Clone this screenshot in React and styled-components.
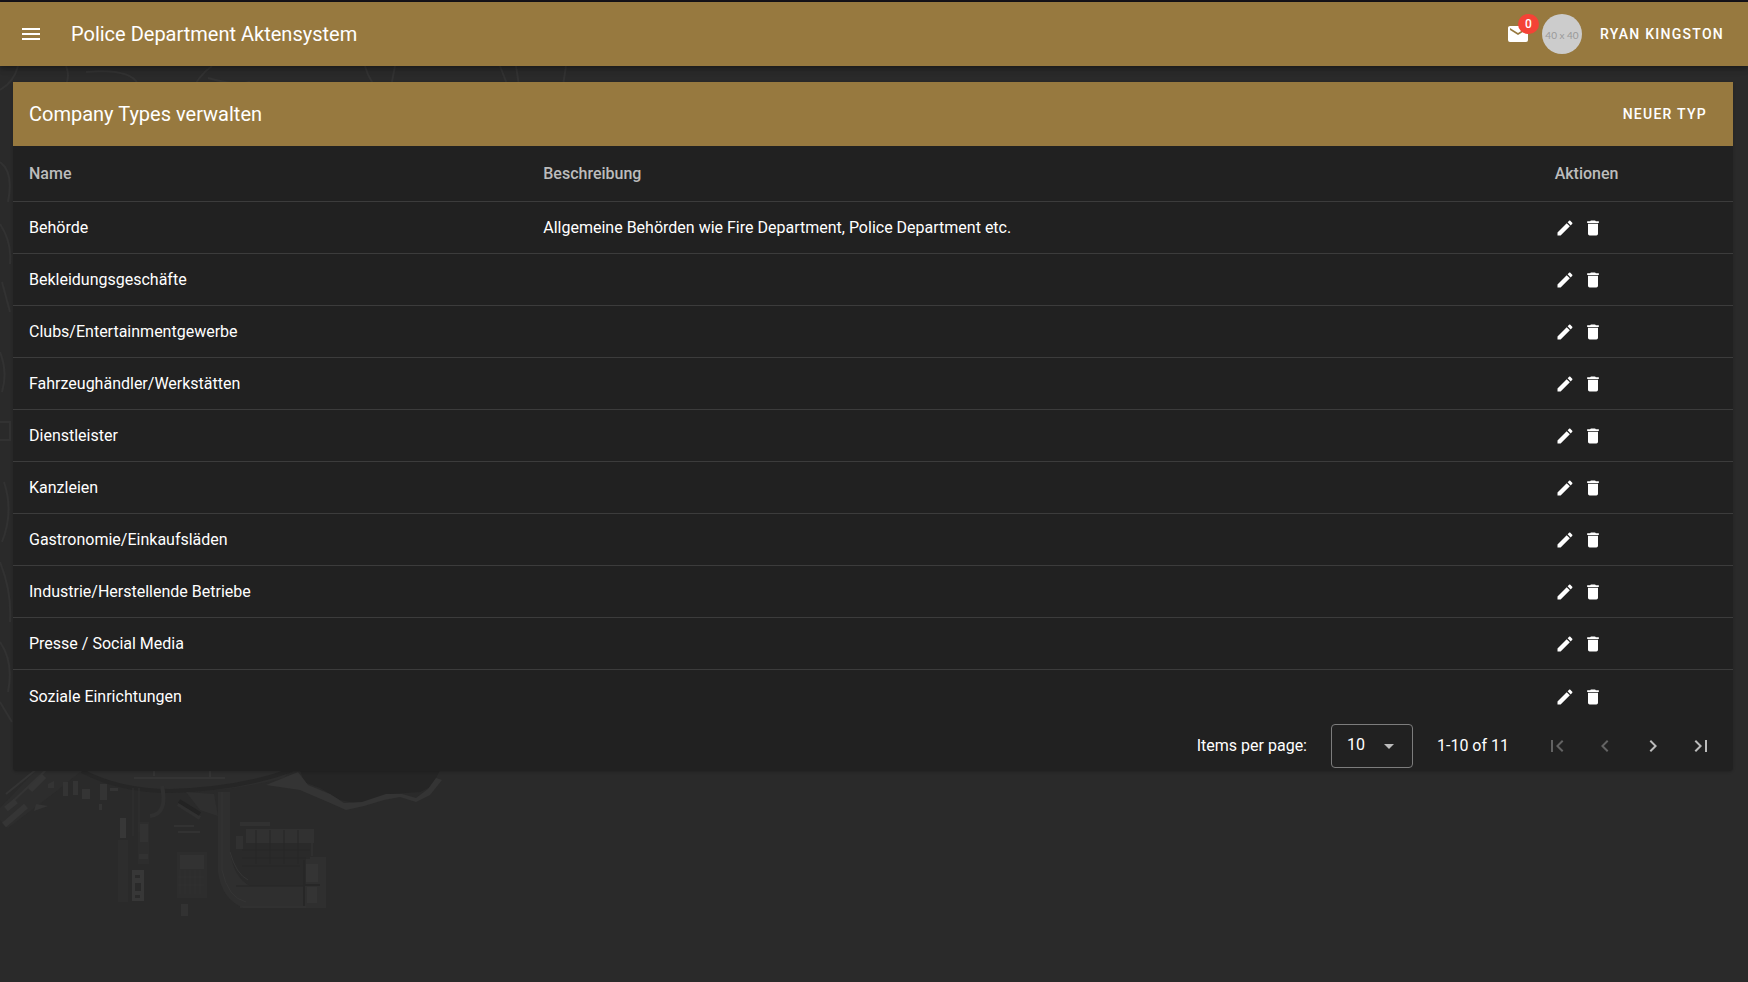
import React from "react";
import styled, { createGlobalStyle } from "styled-components";

const GlobalStyle = createGlobalStyle`
  *, *::before, *::after { box-sizing: border-box; }
  body { margin: 0; background: #2a2a2a; color: #fff; font: 400 16px/24px Roboto, sans-serif; }
  button, select { font: inherit; color: inherit; }
`;

const Page = styled.div`
  display: grid;
  grid-template-columns: minmax(0, 1fr);
  min-height: 100vh;
  border-top: 2px solid #16131a;
`;
const Backdrop = styled.svg`
  grid-area: 1 / 1;
  width: 100%;
  height: 100%;
  fill: none;
  stroke-linecap: butt;
`;
const Layout = styled.div`
  grid-area: 1 / 1;
  min-width: 0;
  z-index: 1;
`;
const AppBar = styled.header`
  display: flex;
  align-items: center;
  height: 64px;
  padding: 0 8px 0 7px;
  background: #97793f;
  box-shadow: 0 2px 4px -1px rgba(0, 0, 0, 0.2), 0 4px 5px rgba(0, 0, 0, 0.14), 0 1px 10px rgba(0, 0, 0, 0.12);
`;
const IconButton = styled.button`
  display: grid;
  place-items: center;
  width: 48px;
  height: 48px;
  padding: 0;
  border: 0;
  background: none;
  color: ${(p) => p.$color || "#fff"};
`;
const AppTitle = styled.h1`
  flex: 1;
  margin: 0 0 0 16px;
  font-size: 20px;
  font-weight: 400;
`;
const MailButton = styled.button`
  position: relative;
  display: block;
  width: 24px;
  height: 24px;
  padding: 0;
  border: 0;
  background: none;
`;
const Badge = styled.span`
  position: absolute;
  left: 12px;
  bottom: 12px;
  min-width: 20px;
  height: 20px;
  padding: 0 7px;
  border-radius: 10px;
  background: #f44336;
  font-size: 12px;
  font-weight: 500;
  line-height: 20px;
`;
const Avatar = styled.span`
  width: 40px;
  height: 40px;
  margin-left: 12px;
  border-radius: 50%;
  background: #ccc;
  color: #999;
  font: 10px/42px Lato, sans-serif;
  text-align: center;
`;
const TextButton = styled.button`
  height: 36px;
  margin-left: 2px;
  padding: 0 16px;
  border: 0;
  background: none;
  font-size: 14px;
  font-weight: 500;
  letter-spacing: 0.09em;
  text-transform: uppercase;
`;
const Main = styled.main`
  padding: 16px 15px 16px 13px;
`;
const Card = styled.section`
  border-radius: 0 0 4px 4px;
  background: #212121;
  box-shadow: 0 1px 3px rgba(0, 0, 0, 0.2);
`;
const CardBar = styled.div`
  display: flex;
  align-items: center;
  justify-content: space-between;
  height: 64px;
  padding: 0 10px 0 16px;
  background: #97793f;
`;
const CardTitle = styled.h2`
  margin: 0;
  font-size: 20px;
  font-weight: 400;
`;
const Table = styled.table`
  width: 100%;
  table-layout: fixed;
  border-spacing: 0;
`;
const HeadCell = styled.th`
  width: ${(p) => p.$width};
  height: 56px;
  padding: 0 16px;
  border-bottom: 1px solid #3c3c3c;
  color: #bcbcbc;
  font-weight: 500;
  text-align: left;
`;
const Cell = styled.td`
  height: 52px;
  padding: 0 16px;
  border-bottom: 1px solid #3c3c3c;
  tr:last-child > & { border-bottom: 0; padding-top: 1px; }
`;
const Actions = styled.div`
  display: flex;
  gap: 8px;
  padding-top: 1px;
`;
const ActionButton = styled.button`
  display: block;
  width: 20px;
  height: 20px;
  padding: 0;
  border: 0;
  background: none;
`;
const Footer = styled.footer`
  display: flex;
  flex-wrap: wrap;
  align-items: center;
  justify-content: flex-end;
  padding: 0 8px 1px;
`;
const SelectBox = styled.span`
  display: grid;
  align-items: center;
  width: 82px;
  height: 44px;
  margin: 0 24px;
  svg { grid-area: 1 / 1; justify-self: end; margin-right: 12px; pointer-events: none; color: #bcbcbc; }
`;
const Select = styled.select`
  grid-area: 1 / 1;
  width: 100%;
  height: 100%;
  padding: 0 15px 2px;
  border: 1px solid #7d7d7d;
  border-radius: 4px;
  appearance: none;
  background: #212121;
`;
const Pager = styled.nav`
  display: flex;
  margin-left: 24px;
`;
const Glyph = styled.svg`
  display: block;
  fill: currentColor;
`;

const paths = {
  menu: "M3,6H21V8H3V6M3,11H21V13H3V11M3,16H21V18H3V16Z",
  email: "M20,8L12,13L4,8V6L12,11L20,6M20,4H4C2.89,4 2,4.89 2,6V18A2,2 0 0,0 4,20H20A2,2 0 0,0 22,18V6C22,4.89 21.1,4 20,4Z",
  pencil: "M20.71,7.04C21.1,6.65 21.1,6 20.71,5.63L18.37,3.29C18,2.9 17.35,2.9 16.96,3.29L15.12,5.12L18.87,8.87M3,17.25V21H6.75L17.81,9.93L14.06,6.18L3,17.25Z",
  trash: "M19,4H15.5L14.5,3H9.5L8.5,4H5V6H19M6,19A2,2 0 0,0 8,21H16A2,2 0 0,0 18,19V7H6V19Z",
  down: "M7,10L12,15L17,10H7Z",
  first: "M18.41,16.59L13.82,12L18.41,7.41L17,6L11,12L17,18L18.41,16.59M6,6H8V18H6V6Z",
  prev: "M15.41,16.58L10.83,12L15.41,7.41L14,6L8,12L14,18L15.41,16.58Z",
  next: "M8.59,16.58L13.17,12L8.59,7.41L10,6L16,12L10,18L8.59,16.58Z",
  last: "M5.59,7.41L10.18,12L5.59,16.59L7,18L13,12L7,6L5.59,7.41M16,6H18V18H16V6Z",
};
const Icon = ({ name, size = 24 }) => (
  <Glyph width={size} height={size} viewBox="0 0 24 24" aria-hidden="true">
    <path d={paths[name]} />
  </Glyph>
);

// Faint aerial view of the harbour and its shoreline.
const HarbourMap = () => (
  <Backdrop aria-hidden="true">
    {/* hills behind the top and left edges */}
    <g stroke="#323232" strokeWidth="2">
      <path d="M0 88Q14 80 18 64M66 64Q72 78 60 92M190 92Q198 74 212 64M86 70Q130 66 138 82M208 76Q235 84 250 80M365 64Q370 82 382 90M395 64L390 90M500 64L510 90M516 64L520 90M566 64L562 90" />
      <path d="M0 160Q14 170 8 200M0 222Q12 240 10 262M2 280L10 310M0 350Q8 370 2 390M0 420H10V438H0M4 480Q14 510 2 540M0 560Q12 590 10 620M0 640Q14 660 8 690M0 700L12 720" />
    </g>
    {/* mainland roads and the coast */}
    <path fill="#2d2d2d" d="M36 768H290L284 776Q220 792 165 790Q110 786 80 770L58 788L8 826L0 818V806Z" />
    <path stroke="#262626" strokeWidth="4" d="M82 769Q120 789 170 789Q240 787 292 768" />
    <path stroke="#343434" strokeWidth="2" d="M6 792L38 766M10 802L46 768M134 776H225M154 766V774M210 766V776" />
    <path stroke="#353535" strokeWidth="6" d="M4 823L26 804M6 807L16 799M30 788L44 774" />
    <g fill="#343434">
      <path d="M63 780h5v14h-5zM73 779h5v14h-5zM82 787h8v10h-8zM100 782h7v16h-7zM110 786h8v3h-8zM99 802h3v6h-3zM36 802l12 2-14 5zM48 782l6-3v7h-6z" />
    </g>
    <path fill="#252525" d="M300 768H440L432 784L420 790L390 792L360 802L340 798L320 786L304 780Z" />
    <path fill="#343434" d="M266 783L298 770L308 783L330 792L344 801L362 800L386 792L402 792L416 796L428 787L436 776L442 778L430 793L416 800L400 795L384 798L364 804L346 808L328 800L300 788Z" />
    {/* piers */}
    <path fill="#2d2d2d" d="M118 838h10v62h-10zM138 820h11v42h-11zM177 850h30v46h-30z" />
    <path fill="#373737" d="M120 816h6v20h-6zM132 868h12v31h-12z" />
    <path fill="#2a2a2a" d="M135 873h5v3h-5zM135 881h6v8h-6zM135 893h5v3h-5z" />
    <path fill="#323232" d="M140 822h8v18h-8zM139 852h9v5h-9zM180 853h24v14h-24zM181 902h7v12h-7zM178 829h22v2h-22zM174 823h20v2h-20z" />
    <path stroke="#313131" d="M133 786V834M139 786V830M180 868V892M185 868V892M190 868V892M195 868V892M200 868V892M178 875H204M178 883H204" />
    <path stroke="#303030" strokeWidth="4" d="M162 784Q168 812 150 814M178 802L200 816" />
    <path fill="#2f2f2f" d="M186 790L214 792L218 814L200 808Z" />
    <path stroke="#232323" strokeWidth="4" d="M179 799L200 812" />
    {/* container terminal */}
    <path fill="#2f2f2f" d="M218 790H230V850Q234 876 250 884H306V855H326V906H244Q222 898 218 870Z" />
    <path stroke="#353535" strokeWidth="1" d="M222 790V868Q228 896 246 900M230 850Q236 872 248 878M240 905H306M312 828V854" />
    <path fill="#313131" d="M236 834h7v13h-7zM246 827h68v14h-68zM240 820h30v4h-30z" />
    <path stroke="#272727" d="M256 828V862M270 828V862M284 828V862M298 828V862M242 848H310M242 856H310M242 864H300M236 884H304" />
    <path fill="#343434" d="M306 862h12v18h-12zM307 885h10v16h-10z" />
    <path stroke="#272727" strokeWidth="2" d="M304 858V904M304 883H320" />
  </Backdrop>
);

const types = [
  ["Behörde", "Allgemeine Behörden wie Fire Department, Police Department etc."],
  ["Bekleidungsgeschäfte", ""],
  ["Clubs/Entertainmentgewerbe", ""],
  ["Fahrzeughändler/Werkstätten", ""],
  ["Dienstleister", ""],
  ["Kanzleien", ""],
  ["Gastronomie/Einkaufsläden", ""],
  ["Industrie/Herstellende Betriebe", ""],
  ["Presse / Social Media", ""],
  ["Soziale Einrichtungen", ""],
];

export default function App() {
  return (
    <Page>
      <GlobalStyle />
      <HarbourMap />
      <Layout>
        <AppBar>
          <IconButton aria-label="Menü"><Icon name="menu" /></IconButton>
          <AppTitle>Police Department Aktensystem</AppTitle>
          <MailButton aria-label="Nachrichten"><Icon name="email" /><Badge>0</Badge></MailButton>
          <Avatar>40 x 40</Avatar>
          <TextButton>Ryan Kingston</TextButton>
        </AppBar>
        <Main>
          <Card>
            <CardBar>
              <CardTitle>Company Types verwalten</CardTitle>
              <TextButton>Neuer Typ</TextButton>
            </CardBar>
            <Table>
              <thead>
                <tr>
                  <HeadCell $width="29.9%">Name</HeadCell>
                  <HeadCell>Beschreibung</HeadCell>
                  <HeadCell $width="11.3%">Aktionen</HeadCell>
                </tr>
              </thead>
              <tbody>
                {types.map(([name, text]) => (
                  <tr key={name}>
                    <Cell>{name}</Cell>
                    <Cell>{text}</Cell>
                    <Cell>
                      <Actions>
                        <ActionButton aria-label={`${name} bearbeiten`}><Icon name="pencil" size={20} /></ActionButton>
                        <ActionButton aria-label={`${name} löschen`}><Icon name="trash" size={20} /></ActionButton>
                      </Actions>
                    </Cell>
                  </tr>
                ))}
              </tbody>
            </Table>
            <Footer>
              <label htmlFor="per-page">Items per page:</label>
              <SelectBox>
                <Select id="per-page" defaultValue="10"><option>10</option><option>25</option><option>50</option></Select>
                <Icon name="down" />
              </SelectBox>
              <span>1-10 of 11</span>
              <Pager aria-label="Seiten">
                <IconButton $color="#636363" aria-label="Erste Seite" disabled><Icon name="first" /></IconButton>
                <IconButton $color="#636363" aria-label="Vorherige Seite" disabled><Icon name="prev" /></IconButton>
                <IconButton $color="#bcbcbc" aria-label="Nächste Seite"><Icon name="next" /></IconButton>
                <IconButton $color="#bcbcbc" aria-label="Letzte Seite"><Icon name="last" /></IconButton>
              </Pager>
            </Footer>
          </Card>
        </Main>
      </Layout>
    </Page>
  );
}
